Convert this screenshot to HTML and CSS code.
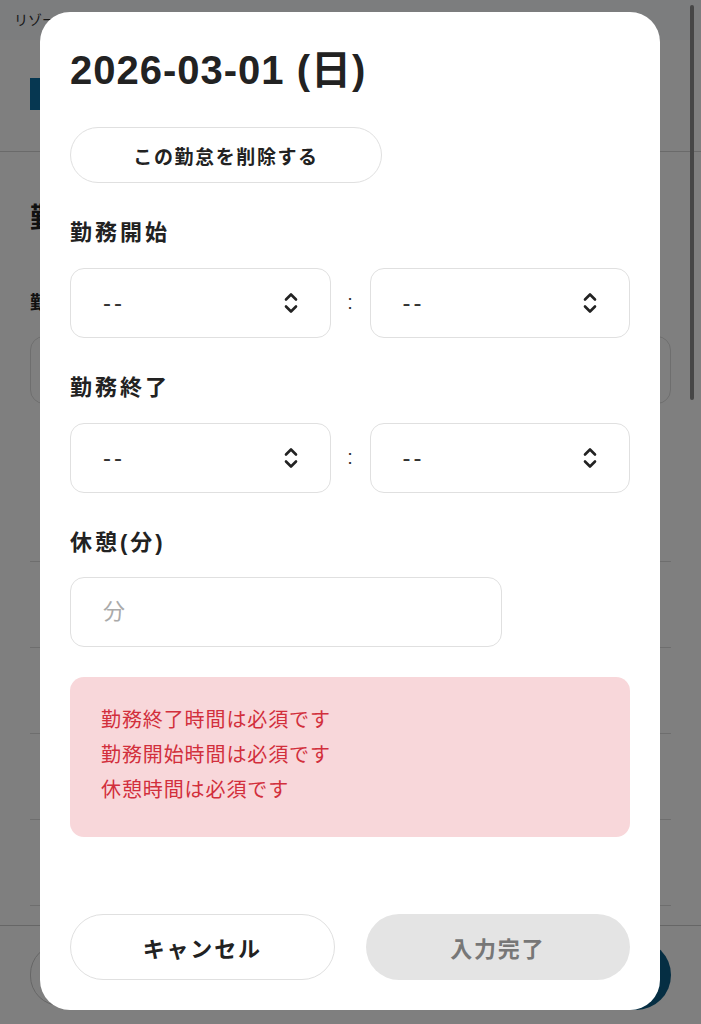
FILE: index.html
```html
<!DOCTYPE html>
<html lang="ja">
<head>
    <meta charset="UTF-8">
    <meta name="viewport" content="width=device-width, initial-scale=1.0">
    <title>勤怠入力</title>
    <link rel="stylesheet" href="styles.css">
</head>
<body>
    <div class="page">
        <div class="topbar">リゾート勤怠管理</div>
        <div class="header">
            <div class="logo">R</div>
        </div>
        <div class="content">
            <h2 class="page-title">勤怠入力</h2>
            <p class="page-label">勤務先</p>
            <div class="page-input"></div>
            <div class="rows">
                <div class="row"></div>
                <div class="row"></div>
                <div class="row"></div>
                <div class="row"></div>
                <div class="row"></div>
            </div>
        </div>
        <div class="bottombar">
            <div class="bottom-pill"></div>
            <div class="bottom-fab"></div>
        </div>
    </div>

    <div class="overlay">
        <div class="modal">
            <h1 class="modal-title">2026-03-01 (日)</h1>
            <button class="delete-button">この勤怠を削除する</button>

            <label class="field-label">勤務開始</label>
            <div class="time-row">
                <div class="select">
                    <span>--</span>
                    <svg class="chevrons" width="16" height="26" viewBox="0 0 16 26"><path d="M3 9.5 L8 4.5 L13 9.5 M3 16.5 L8 21.5 L13 16.5" fill="none" stroke="#222" stroke-width="2.6" stroke-linecap="round" stroke-linejoin="round"/></svg>
                </div>
                <span class="colon">:</span>
                <div class="select">
                    <span>--</span>
                    <svg class="chevrons" width="16" height="26" viewBox="0 0 16 26"><path d="M3 9.5 L8 4.5 L13 9.5 M3 16.5 L8 21.5 L13 16.5" fill="none" stroke="#222" stroke-width="2.6" stroke-linecap="round" stroke-linejoin="round"/></svg>
                </div>
            </div>

            <label class="field-label">勤務終了</label>
            <div class="time-row">
                <div class="select">
                    <span>--</span>
                    <svg class="chevrons" width="16" height="26" viewBox="0 0 16 26"><path d="M3 9.5 L8 4.5 L13 9.5 M3 16.5 L8 21.5 L13 16.5" fill="none" stroke="#222" stroke-width="2.6" stroke-linecap="round" stroke-linejoin="round"/></svg>
                </div>
                <span class="colon">:</span>
                <div class="select">
                    <span>--</span>
                    <svg class="chevrons" width="16" height="26" viewBox="0 0 16 26"><path d="M3 9.5 L8 4.5 L13 9.5 M3 16.5 L8 21.5 L13 16.5" fill="none" stroke="#222" stroke-width="2.6" stroke-linecap="round" stroke-linejoin="round"/></svg>
                </div>
            </div>

            <label class="field-label">休憩(分)</label>
            <input class="break-input" type="text" placeholder="分">

            <div class="error-box">
                <p>勤務終了時間は必須です</p>
                <p>勤務開始時間は必須です</p>
                <p>休憩時間は必須です</p>
            </div>

            <div class="modal-footer">
                <button class="cancel-button">キャンセル</button>
                <button class="submit-button" disabled>入力完了</button>
            </div>
        </div>
    </div>

    <div class="scrollbar"></div>
</body>
</html>
```

FILE: styles.css
```css
html, body {
    margin: 0;
    height: 1024px;
    overflow: hidden;
}
body {
    font-family: "Liberation Sans", "Noto Sans CJK JP", sans-serif;
    color: #222;
    background-color: #fff;
}

/* page behind the dialog */
.page {
    display: flex;
    flex-direction: column;
    height: 1024px;
}
.topbar {
    height: 40px;
    box-sizing: border-box;
    padding: 9px 14px 0;
    font-size: 14px;
    color: #333;
    background-color: #f8fafd;
}
.header {
    height: 112px;
    box-sizing: border-box;
    padding: 38px 30px 0;
    border-bottom: 1px solid #d4d4d4;
}
.logo {
    width: 32px;
    height: 32px;
    background-color: #0c6fa3;
    color: #fff;
    font-weight: bold;
    text-align: center;
    line-height: 32px;
}
.content {
    flex: 1;
    min-height: 0;
    overflow: hidden;
    padding: 0 30px;
}
.page-title {
    font-size: 28px;
    margin: 44px 0 0;
}
.page-label {
    font-size: 18px;
    font-weight: bold;
    margin: 52px 0 22px;
}
.page-input {
    height: 66px;
    border: 1px solid #ddd;
    border-radius: 14px;
}
.rows {
    margin-top: 157px;
}
.row {
    height: 85px;
    border-top: 1px solid #ddd;
}
.bottombar {
    height: 98px;
    border-top: 1px solid #ccc;
    display: flex;
    justify-content: space-between;
    align-items: center;
    padding: 0 30px;
}
.bottom-pill {
    width: 280px;
    height: 60px;
    border: 1px solid #ccc;
    border-radius: 30px;
}
.bottom-fab {
    width: 70px;
    height: 70px;
    border-radius: 50%;
    background-color: #0b5d86;
}

/* dialog */
.overlay {
    position: fixed;
    top: 0;
    left: 0;
    right: 0;
    bottom: 0;
    background-color: rgba(0, 0, 0, 0.5);
    padding: 12px 41px 14px 40px;
    display: flex;
}
.modal {
    flex: 1;
    display: flex;
    flex-direction: column;
    align-items: flex-start;
    background-color: #fff;
    border-radius: 30px;
    padding: 34px 30px 30px;
}
.modal-title {
    font-size: 40px;
    line-height: 48px;
    letter-spacing: 1px;
    margin: 0;
    color: #222;
}
.delete-button {
    margin-top: 33px;
    width: 312px;
    height: 56px;
    border: 1.5px solid #e0e0e0;
    border-radius: 28px;
    background-color: #fff;
    font-family: inherit;
    font-size: 19px;
    font-weight: bold;
    letter-spacing: 1.6px;
    color: #222;
}
.field-label {
    margin-top: 35px;
    font-size: 22px;
    line-height: 1.4;
    letter-spacing: 3px;
    font-weight: bold;
}
.time-row {
    margin-top: 19px;
    width: 100%;
    display: grid;
    grid-template-columns: 1fr 39px 1fr;
    align-items: center;
}
.select {
    height: 70px;
    box-sizing: border-box;
    border: 1.5px solid #e0e0e0;
    border-radius: 14px;
    display: flex;
    align-items: center;
    justify-content: space-between;
    padding: 0 31px 0 32px;
    font-size: 24px;
    color: #333;
    letter-spacing: 3px;
}
.chevrons {
    display: block;
}
.colon {
    text-align: center;
    font-size: 20px;
    color: #333;
}
.break-input {
    margin-top: 19px;
    width: 432px;
    height: 70px;
    box-sizing: border-box;
    border: 1.5px solid #e0e0e0;
    border-radius: 14px;
    padding: 0 32px;
    font-family: inherit;
    font-size: 22px;
}
.break-input::placeholder {
    color: #aaa;
}
.error-box {
    margin-top: 30px;
    width: 100%;
    box-sizing: border-box;
    height: 160px;
    padding: 26px 31px;
    background-color: #f8d7da;
    border-radius: 14px;
    color: #d22f3c;
    font-size: 20px;
    letter-spacing: 0.9px;
}
.error-box p {
    margin: 0;
    line-height: 35px;
}
.modal-footer {
    margin-top: auto;
    width: 100%;
    display: grid;
    grid-template-columns: 1fr 1fr;
    gap: 31px;
}
.modal-footer button {
    height: 66px;
    border-radius: 33px;
    font-family: inherit;
    font-size: 22px;
    font-weight: bold;
    letter-spacing: 1.8px;
}
.cancel-button {
    background-color: #fff;
    border: 1.5px solid #e0e0e0;
    color: #222;
}
.submit-button {
    background-color: #e4e4e4;
    border: none;
    color: #777;
}

.scrollbar {
    position: fixed;
    top: 5px;
    right: 7px;
    width: 4px;
    height: 395px;
    border-radius: 2px;
    background-color: #464646;
}
```
